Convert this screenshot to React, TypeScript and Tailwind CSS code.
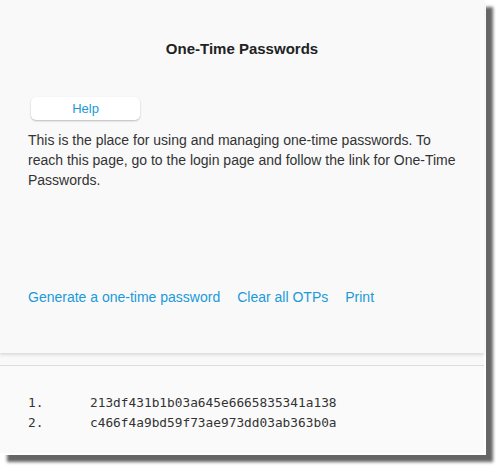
const otps = [
  "213df431b1b03a645e6665835341a138",
  "c466f4a9bd59f73ae973dd03ab363b0a",
];

export default function App() {
  return (
    <div className="w-[500px] h-[469px] bg-white font-['Liberation_Sans',Arial,sans-serif]">
      <div className="w-[486px] h-[455px] border-r-2 border-b-2 border-white bg-white shadow-[7px_7px_3px_rgba(0,0,0,0.6)]">
        <div className="flex h-full flex-col bg-[#f9f9f9]">
          <div className="h-[353px] bg-[#f9f9f9] shadow-[0_2px_3px_rgba(0,0,0,0.12)]">
            <h1 className="pt-[38px] text-center text-[15px] font-bold text-[#222]">
              One-Time Passwords
            </h1>
            <div className="mt-[35px] px-[31px]">
              <button className="h-[23px] w-[109px] rounded-[5px] bg-white text-[13px] text-[#1a9ad9] shadow-[0_1px_2px_rgba(0,0,0,0.25)]">
                Help
              </button>
            </div>
            <p className="mt-[10px] px-[28px] text-[14px] leading-[20px] text-[#333]">
              This is the place for using and managing one-time passwords. To
              reach this page, go to the login page and follow the link for
              One-Time Passwords.
            </p>
            <div className="mt-[97px] flex gap-[17px] px-[28px] text-[14px] text-[#1a9ad9]">
              <a href="#">Generate a one-time password</a>
              <a href="#">Clear all OTPs</a>
              <a href="#">Print</a>
            </div>
          </div>
          <div className="mt-[12px] flex-1 border-t border-[#dcdcdc] bg-[#fafafa] px-[28px] pt-[27px]">
            <ol className="font-['DejaVu_Sans_Mono',monospace] text-[12.8px] leading-[20px] text-[#333]">
              {otps.map((code, i) => (
                <li key={code} className="flex">
                  <span className="w-[62px]">{i + 1}.</span>
                  <span>{code}</span>
                </li>
              ))}
            </ol>
          </div>
        </div>
      </div>
    </div>
  );
}
